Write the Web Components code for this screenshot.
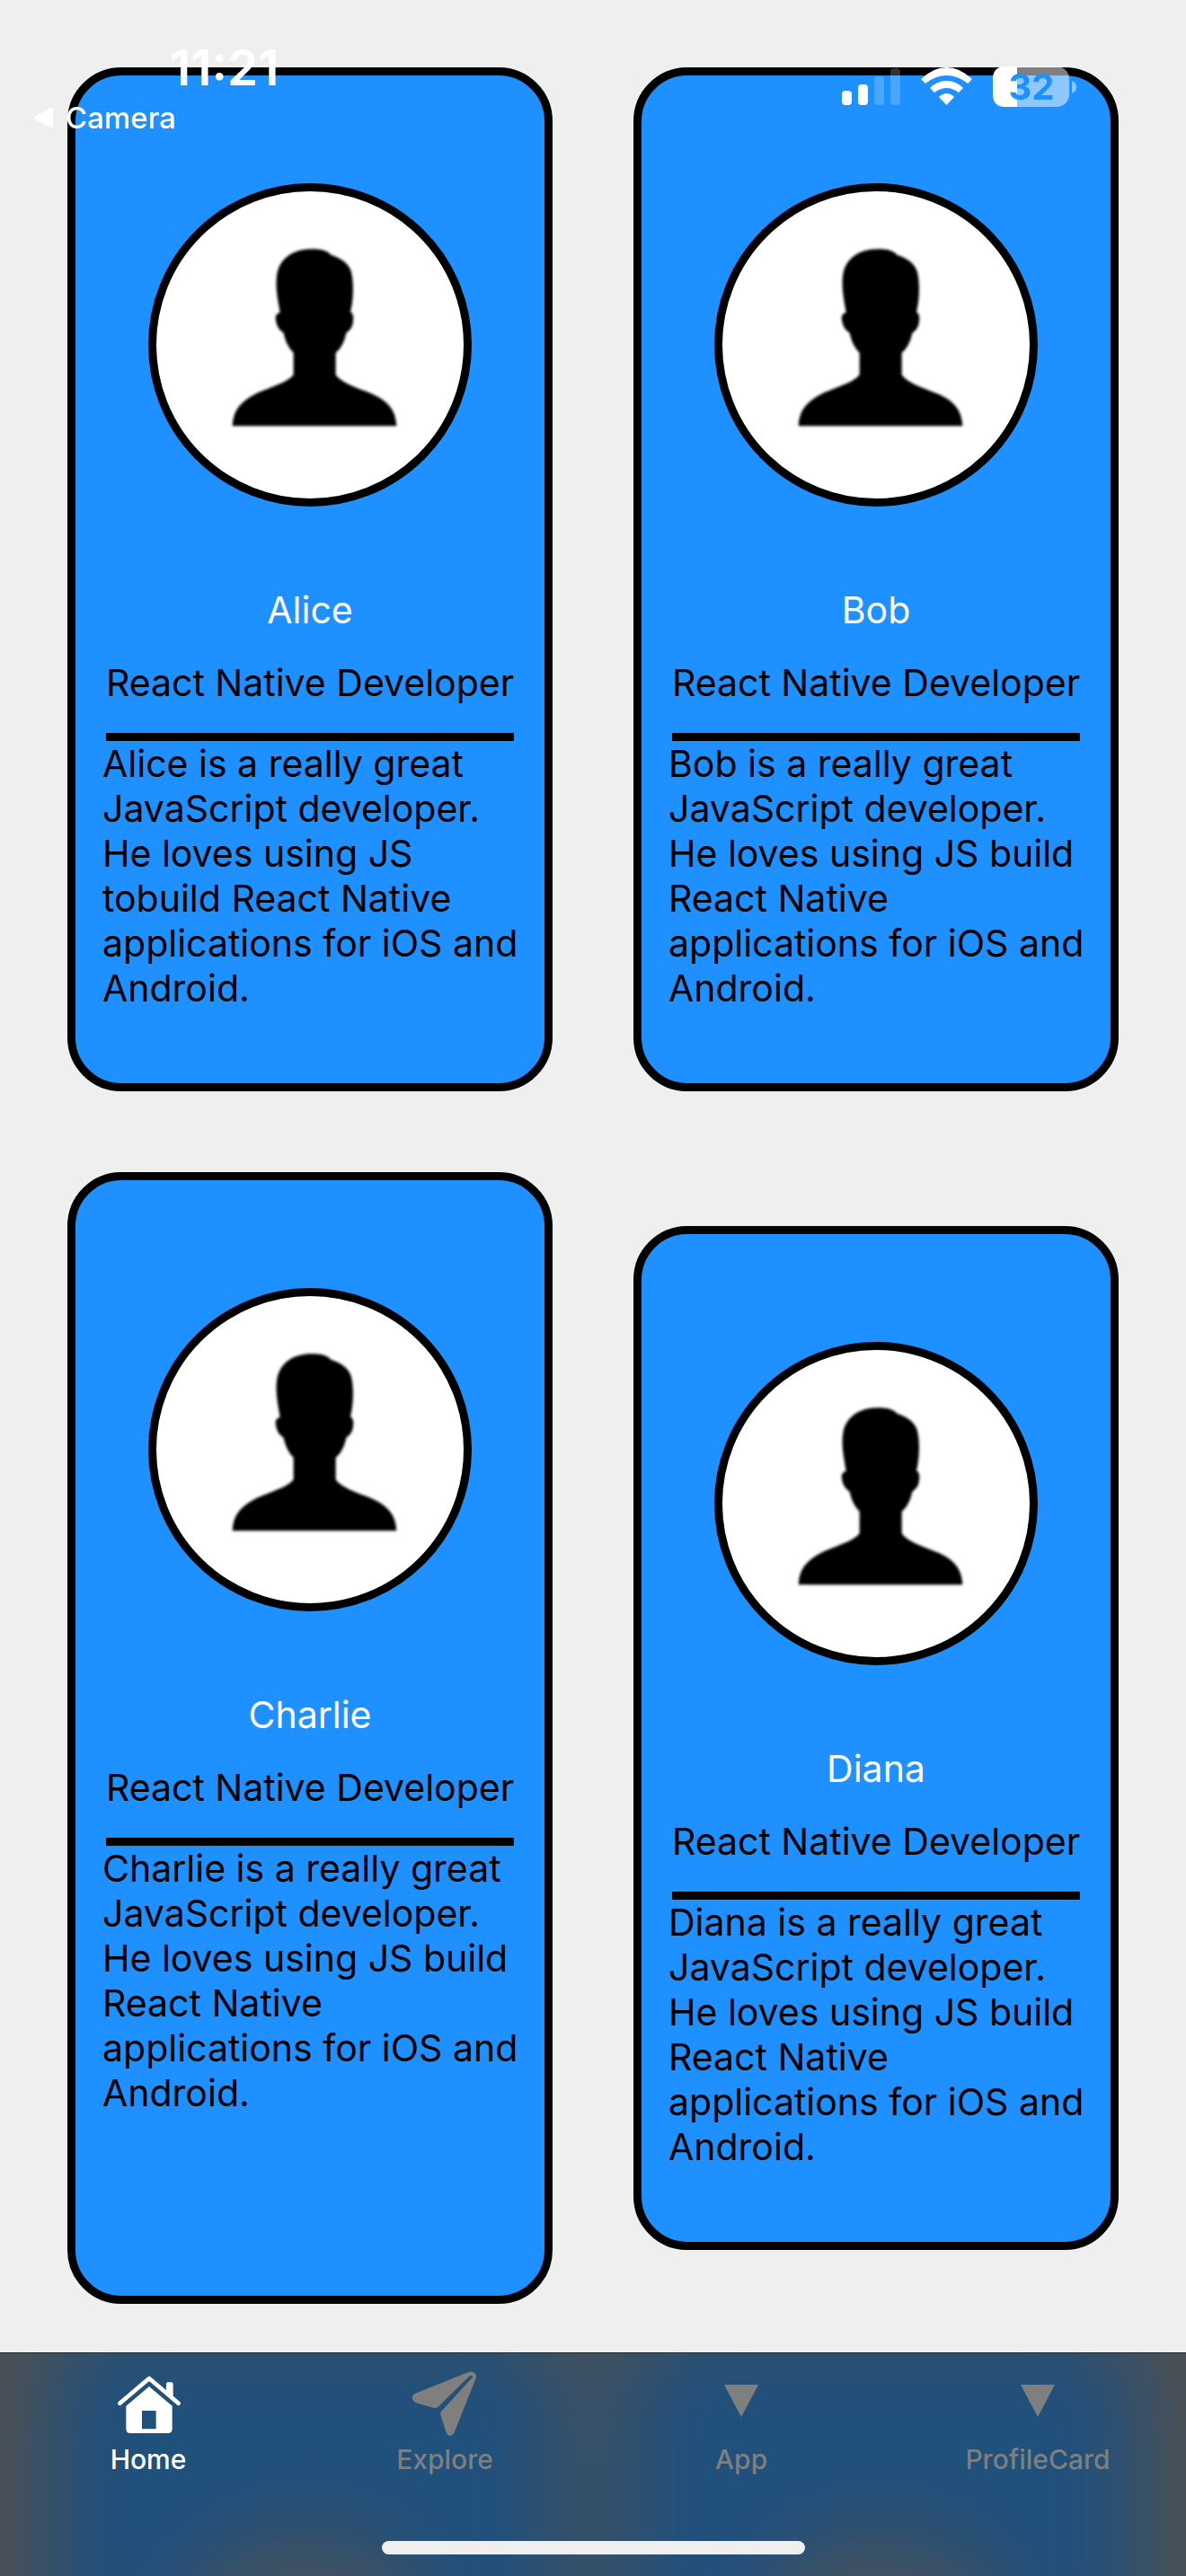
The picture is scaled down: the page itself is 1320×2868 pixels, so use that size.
<!DOCTYPE html>
<html lang="en">
<head>
<meta charset="utf-8">
<meta name="viewport" content="width=device-width, initial-scale=1">
<title>Profile cards</title>
<style>
  body { margin: 0; background: #efefef; color: #000; font-family: Inter, "Liberation Sans", sans-serif; }
</style>
</head>
<body>
<profile-app></profile-app>
<script>
const define = (name, html, setup) => {
  const template = document.createElement('template');
  template.innerHTML = html;
  customElements.define(name, class extends HTMLElement {
    constructor() {
      super();
      this.attachShadow({ mode: 'open' }).append(template.content.cloneNode(true));
    }
    connectedCallback() { if (setup) setup(this); }
  });
};

/* Round portrait with the placeholder silhouette */
define('profile-avatar', `
  <style>
    :host { display: block; box-sizing: border-box; width: 360px; height: 360px; border: 9px solid #000; border-radius: 50%; background: #fff; overflow: hidden; }
    svg { display: block; width: 100%; height: 100%; }
    path { filter: blur(4px); }
  </style>
  <svg viewBox="72 69 1026 1026" role="img" aria-label="Profile picture">
    <path d="M590 262C615 262 640 264 656 282C688 292 712 308 722 335C732 370 731 430 720 472C730 478 731 490 729 505C727 520 722 532 706 542C700 570 690 592 671 608V682C690 710 745 726 795 747C845 770 872 800 874 853H326C328 800 355 770 405 745C455 722 510 708 530 682V608C512 590 502 567 497 542C478 530 472 512 470 492C470 482 476 476 485 474C478 430 468 390 475 345C484 296 525 262 590 262Z"/>
  </svg>`);

define('profile-card', `
  <style>
    :host { display: flex; flex-direction: column; align-items: center; box-sizing: border-box; min-height: 1140px; padding: 120px 16px 80px; border: 9px solid #000; border-radius: 60px; background: #1e90ff; font-size: 41px; line-height: 50px; }
    :host([tall]) { min-height: 1260px; }
    h2, .role { margin: 0; font: inherit; line-height: 51px; white-space: nowrap; }
    h2 { margin: 90px 0 30px; color: #fff; }
    .role { padding-bottom: 30px; border-bottom: 9px solid #000; }
    .bio { align-self: stretch; margin: 0; padding-left: 14px; }
  </style>
  <profile-avatar></profile-avatar>
  <h2><slot name="name"></slot></h2>
  <p class="role"><slot name="role"></slot></p>
  <p class="bio"><slot></slot></p>`);

/* Clock, back link and system indicators laid over the page */
define('status-bar', `
  <style>
    :host { position: fixed; inset: 0 0 auto 0; z-index: 2; display: flex; justify-content: space-between; box-sizing: border-box; padding: 44px 120px 0 37px; color: #fff; }
    .left { display: flex; flex-direction: column; gap: 5px; }
    time { padding-left: 152px; font-size: 55px; line-height: 62px; font-weight: 600; }
    a { display: flex; align-items: center; gap: 14px; color: inherit; text-decoration: none; font-size: 33px; line-height: 40px; font-weight: 500; }
    .right { display: flex; padding-top: 28px; }
    svg { display: block; }
    text { font-weight: 700; font-size: 40px; }
  </style>
  <div class="left">
    <time>11:21</time>
    <a href="#camera"><svg width="22" height="22" viewBox="0 0 22 22" aria-hidden="true"><path d="M20 2v18L3 11Z" fill="#fff" stroke="#fff" stroke-width="4" stroke-linejoin="round"/></svg><span>Camera</span></a>
  </div>
  <div class="right">
    <svg width="263" height="50" viewBox="937 72 263 50" fill="#fff" role="img" aria-label="Signal, Wi-Fi and battery">
      <rect x="937" y="101" width="11" height="16" rx="4"/>
      <rect x="955" y="94" width="11" height="23" rx="4"/>
      <rect x="973" y="85" width="11" height="32" rx="4" opacity=".2"/>
      <rect x="991" y="76" width="11" height="41" rx="4" opacity=".2"/>
      <path d="M1025 88Q1039 75 1053.500 75T1082 88L1077 93Q1066 84 1053.500 84T1030 93Z"/>
      <path d="M1035 98Q1043 90 1053.500 90T1072 98L1067 103Q1060 98 1053.500 98T1040 103Z"/>
      <path d="M1045 108Q1049 104 1053.500 104T1062 108L1053.500 117Z"/>
      <rect x="1105" y="74" width="85" height="45" rx="14" opacity=".5"/>
      <path d="M1132 74H1119Q1105 74 1105 88V105Q1105 119 1119 119H1132Z"/>
      <path d="M1193 90Q1198 92 1198 97T1193 104Z" opacity=".5"/>
      <text x="1148" y="111" text-anchor="middle" fill="#1e90ff">32</text>
    </svg>
  </div>`);

define('tab-item', `
  <style>
    :host { display: block; flex: 1; min-width: 0; color: #7f7f7f; }
    :host([current]) { color: #fff; }
    a { display: flex; flex-direction: column; align-items: center; color: inherit; text-decoration: none; font-size: 30px; line-height: 36px; font-weight: 500; }
    .icon { display: block; width: 90px; height: 90px; }
  </style>
  <a><slot name="icon" class="icon"></slot><span><slot></slot></span></a>`,
  el => {
    const link = el.shadowRoot.querySelector('a');
    link.href = '#' + el.textContent.trim().toLowerCase();
    if (el.hasAttribute('current')) link.setAttribute('aria-current', 'page');
  });

/* Translucent dark bar: a softened copy of the next row of cards glows through */
define('tab-bar', `
  <style>
    :host { position: fixed; inset: auto 0 0 0; z-index: 1; display: block; box-sizing: border-box; height: 249px; border-top: 1px solid #222629; background: #505152; overflow: hidden; }
    .glow { position: absolute; inset: -30px 50px auto; display: grid; grid-template-columns: 1fr 1fr; gap: 60px; filter: blur(50px); }
    .glow i { display: flex; justify-content: center; height: 500px; border-radius: 60px; background: #20507c; }
    .glow i::after { content: ""; width: 300px; height: 300px; margin-top: 235px; border-radius: 50%; background: #4a5158; }
    nav { position: relative; display: flex; padding-top: 10px; }
    .home { position: relative; width: 471px; height: 15px; margin: 73px auto 0; border-radius: 8px; background: #efefef; }
  </style>
  <div class="glow" aria-hidden="true"><i></i><i></i></div>
  <nav aria-label="Tabs"><slot></slot></nav>
  <div class="home"></div>`);

define('profile-app', `
  <style>
    :host { display: block; min-height: 100vh; }
    main { display: grid; grid-template-columns: repeat(2, minmax(0, 1fr)); align-items: center; gap: 90px; padding: 75px 75px 303px; }
    svg { display: block; width: 90px; height: 90px; }
  </style>
  <status-bar></status-bar>
  <main>
    <profile-card><span slot="name">Alice</span><span slot="role">React Native Developer</span>Alice is a really great JavaScript developer. He loves using JS tobuild React Native applications for iOS and Android.</profile-card>
    <profile-card><span slot="name">Bob</span><span slot="role">React Native Developer</span>Bob is a really great JavaScript developer. He loves using JS build React Native applications for iOS and Android.</profile-card>
    <profile-card tall><span slot="name">Charlie</span><span slot="role">React Native Developer</span>Charlie is a really great JavaScript developer. He loves using JS build React Native applications for iOS and Android.</profile-card>
    <profile-card><span slot="name">Diana</span><span slot="role">React Native Developer</span>Diana is a really great JavaScript developer. He loves using JS build React Native applications for iOS and Android.</profile-card>
  </main>
  <tab-bar>
    <tab-item current>
      <svg slot="icon" viewBox="0 0 270 270" fill="none" stroke="currentColor" aria-hidden="true">
        <path d="M40 137L138 54L236 137" stroke-width="14" stroke-linecap="round" stroke-linejoin="round"/>
        <path d="M195 102V73Q195 67 201 67H212Q218 67 218 73V124Z" fill="currentColor" stroke="none"/>
        <path d="M138 81L215 146V223Q215 237 201 237H75Q61 237 61 223V146ZM114 162V223H161V162Z" fill="currentColor" stroke="none" fill-rule="evenodd"/>
      </svg>Home</tab-item>
    <tab-item>
      <svg slot="icon" viewBox="0 0 270 270" fill="currentColor" aria-hidden="true">
        <path d="M214 33C230 29 244 38 239 53L168 232C162 250 144 250 139 232L121 176Q119 168 125 162L228 50Q230 45 226 44L218 46L114 148Q108 155 98 152L44 137C22 130 20 110 40 103Z"/>
      </svg>Explore</tab-item>
    <tab-item>
      <svg slot="icon" viewBox="0 0 90 90" fill="currentColor" aria-hidden="true"><path d="M26 25H64L45 61Z"/></svg>App</tab-item>
    <tab-item>
      <svg slot="icon" viewBox="0 0 90 90" fill="currentColor" aria-hidden="true"><path d="M26 25H64L45 61Z"/></svg>ProfileCard</tab-item>
  </tab-bar>`);
</script>
</body>
</html>
